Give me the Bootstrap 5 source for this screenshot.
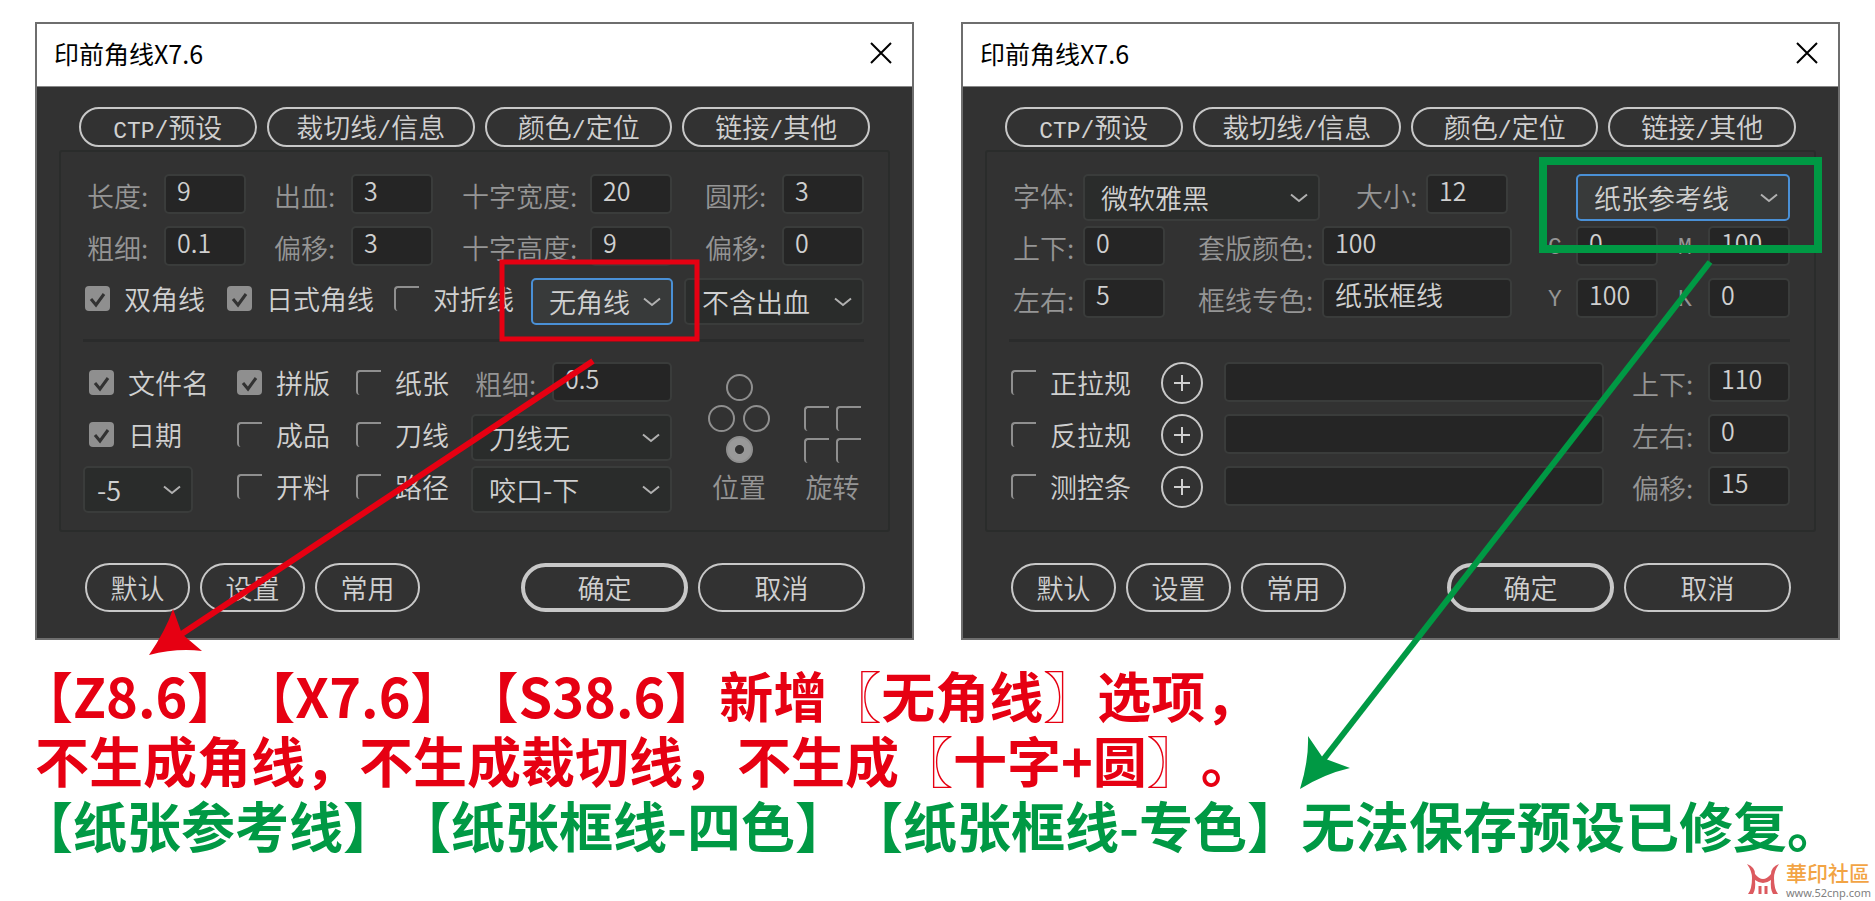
<!DOCTYPE html>
<html lang="zh-CN">
<head>
<meta charset="utf-8">
<meta name="viewport" content="width=device-width, initial-scale=1">
<title>印前角线X7.6</title>
<link href="https://cdn.jsdelivr.net/npm/bootstrap@5.3.0/dist/css/bootstrap.min.css" rel="stylesheet">
<style>
  body { background: #fff; font-family: "Noto Sans CJK SC", sans-serif; }
  .stage { padding: 22px 35px 0; }
  .dialogs { display: grid; grid-template-columns: 1fr 1fr; gap: 47px; }
  .dialogs > *, .tab-row > *, .line-row > *, .lower > * { min-width: 0; }

  .dialog { border: 2px solid #6e6e6e; background: #323232; color: #d0d0d0; font-size: 27px; line-height: 30px; font-weight: 350; }
  .title-bar { height: 63px; padding: 0 20px 4px 17px; background: #fff; color: #000; border-bottom: 1px solid #888; }
  .title-bar h1 { font-size: 25px; line-height: 30px; font-weight: 400; }
  .close-btn { border: 0; background: none; padding: 0; line-height: 0; }
  .dialog-content { padding: 20px 22px 26px; }

  .tab-row { display: grid; grid-template-columns: 178fr 209fr 188fr 188fr; gap: 10px; padding: 0 20px; margin-bottom: 3px; }
  .pill { border: 2px solid #c8c8c8; border-radius: 25px; background: transparent; color: #d0d0d0; padding: 0; font-weight: 350; white-space: nowrap; }
  .tab-row .pill { height: 40px; line-height: 36px; }
  .latin { font-family: "Liberation Mono", monospace; font-size: 23px; }

  .panel { border: 2px solid #2a2c2b; border-radius: 3px; padding: 22px 24px 17px 22px; }
  .rows { display: grid; gap: 5px; }
  .line-row { display: grid; align-items: start; min-height: 47px; }
  .left-a { grid-template-columns: 187fr 188fr 243fr 163fr; }
  .left-b { grid-template-columns: 142fr 167fr 139fr 153fr 180fr; }
  .right-a { grid-template-columns: 343fr 192fr 246fr; }
  .right-b { grid-template-columns: 185fr 350fr 130fr 116fr; }
  .right-c { grid-template-columns: 152fr 63fr 404fr 162fr; }
  .lower { display: grid; grid-template-columns: 152fr 119fr 117fr 235fr 158fr; grid-auto-rows: 47px; row-gap: 5px; align-items: start; }
  .dials { grid-column: 5; grid-row: 1 / 4; padding: 0 3px 13px 2px; height: 100%; }
  .dial { display: flex; flex-direction: column; align-items: center; gap: 10px; }

  .lbl { color: #959595; height: 44px; line-height: 44px; padding-left: 4px; flex: none; white-space: nowrap; }
  .lbl-2 { width: 74px; } .lbl-2w { width: 81px; } .lbl-4 { width: 128px; } .lbl-4w { width: 132px; } .lbl-1 { width: 32px; }
  .txt { height: 40px; border: 2px solid #3a3c3b; border-radius: 5px; background: #252525; color: #d0d0d0; font-size: 25px; font-weight: 350; padding: 0 0 8px 11px; min-width: 0; }
  .txt.cjk { font-size: 27px; }
  .short { width: 82px; flex: none; }
  .drop { height: 47px; border: 2px solid #3a3c3b; border-radius: 5px; background-color: #2a2c2b; color: #d0d0d0; font-size: 27px; font-weight: 350; line-height: 40px; padding: 1px 34px 0 16px;
    background-image: url("data:image/svg+xml,%3Csvg xmlns='http://www.w3.org/2000/svg' viewBox='0 0 18 10'%3E%3Cpath d='M1 1.5l8 6.5 8-6.5' fill='none' stroke='%23b0b0b0' stroke-width='2'/%3E%3C/svg%3E");
    background-size: 18px 10px; background-position: right 10px center; }
  .drop.active { border-color: #4a90d6; background-color: #383a3a; }
  .drop.tight { padding-left: 12px; width: 110px; }
  .drop-s { width: 142px; } .drop-m { width: 201px; }

  .tick { height: 41px; padding-left: 2px; gap: 14px; white-space: nowrap; }
  .tick.inset { padding-left: 6px; }
  .box { appearance: none; flex: none; width: 25px; height: 25px; margin: 0; border: 0 solid #8f8f8f; border-width: 2px 0 0 2px; border-radius: 4px 0 0 4px; }
  .box:checked { border: 0; border-radius: 4px; background: #8f8f8f url("data:image/svg+xml,%3Csvg xmlns='http://www.w3.org/2000/svg' viewBox='0 0 25 25'%3E%3Cpath d='M6 13l5 6L19 8' fill='none' stroke='%23323232' stroke-width='3'/%3E%3C/svg%3E"); }
  .dot { appearance: none; width: 27px; height: 27px; margin: 0; border: 2px solid #8f8f8f; border-radius: 50%; }
  .dot:checked { background: radial-gradient(circle, #323232 4px, #999 5px); }
  .tiles { display: grid; grid-template-columns: 25px 25px; gap: 7px; }
  .divider { height: 3px; margin: 14px 0 20px; background: #2a2b2b; }
  .plus { width: 42px; height: 42px; border-radius: 50%; line-height: 0; }

  .foot { padding: 0 25px 0 26px; margin-top: 31px; gap: 10px; }
  .foot .pill { height: 49px; line-height: 43px; width: 105px; }
  .foot .wide { width: 167px; }
  .foot .primary { border-width: 4px; line-height: 39px; }

  .notes { margin-top: 22px; font-size: 54px; line-height: 65px; font-weight: 700; text-spacing-trim: space-all; white-space: nowrap; }
  .notes p { margin: 0; }
  .hang { text-indent: -16px; }
  .tags { word-break: keep-all; }
  .red { color: #e60012; }
  .green { color: #009944; }

  .marks { position: absolute; left: 0; top: 0; width: 100%; pointer-events: none; }
  .site { position: absolute; right: 4px; bottom: 0; gap: 6px; }
  .site a { color: #808080; text-decoration: none; font: 11px/12px "Noto Sans", sans-serif; padding-bottom: 2px; }
  .site b { color: #f2a444; font-size: 21px; line-height: 30px; font-weight: 500; }
</style>
</head>
<body>
<main class="stage position-relative">
  <div class="dialogs">

    <section class="dialog">
      <header class="title-bar d-flex align-items-center justify-content-between">
        <h1 class="m-0">印前角线X7.6</h1>
        <button class="close-btn" type="button" aria-label="关闭"><svg width="22" height="22" viewBox="0 0 22 22"><path d="M1 1l20 20M21 1L1 21" stroke="#000" stroke-width="2"/></svg></button>
      </header>
      <div class="dialog-content">
        <nav class="tab-row">
          <button class="pill" type="button"><span class="latin">CTP/</span>预设</button>
          <button class="pill" type="button">裁切线<span class="latin">/</span>信息</button>
          <button class="pill" type="button">颜色<span class="latin">/</span>定位</button>
          <button class="pill" type="button">链接<span class="latin">/</span>其他</button>
        </nav>
        <div class="panel">
          <div class="rows">
            <div class="line-row left-a">
              <div class="d-flex"><label class="lbl lbl-2w" for="a1">长度:</label><input class="txt short" id="a1" value="9"></div>
              <div class="d-flex"><label class="lbl lbl-2w" for="a2">出血:</label><input class="txt short" id="a2" value="3"></div>
              <div class="d-flex"><label class="lbl lbl-4w" for="a3">十字宽度:</label><input class="txt short" id="a3" value="20"></div>
              <div class="d-flex"><label class="lbl lbl-2w" for="a4">圆形:</label><input class="txt short" id="a4" value="3"></div>
            </div>
            <div class="line-row left-a">
              <div class="d-flex"><label class="lbl lbl-2w" for="a5">粗细:</label><input class="txt short" id="a5" value="0.1"></div>
              <div class="d-flex"><label class="lbl lbl-2w" for="a6">偏移:</label><input class="txt short" id="a6" value="3"></div>
              <div class="d-flex"><label class="lbl lbl-4w" for="a7">十字高度:</label><input class="txt short" id="a7" value="9"></div>
              <div class="d-flex"><label class="lbl lbl-2w" for="a8">偏移:</label><input class="txt short" id="a8" value="0"></div>
            </div>
            <div class="line-row left-b">
              <label class="tick d-flex align-items-center"><input class="box" type="checkbox" checked>双角线</label>
              <label class="tick d-flex align-items-center"><input class="box" type="checkbox" checked>日式角线</label>
              <label class="tick d-flex align-items-center"><input class="box" type="checkbox">对折线</label>
              <select class="form-select drop active drop-s" aria-label="角线"><option>无角线</option></select>
              <select class="form-select drop" aria-label="出血"><option>不含出血</option></select>
            </div>
          </div>
          <div class="divider"></div>
          <div class="lower">
            <label class="tick inset d-flex align-items-center"><input class="box" type="checkbox" checked>文件名</label>
            <label class="tick d-flex align-items-center"><input class="box" type="checkbox" checked>拼版</label>
            <label class="tick d-flex align-items-center"><input class="box" type="checkbox">纸张</label>
            <div class="d-flex drop-m"><label class="lbl lbl-2w" for="b1">粗细:</label><input class="txt flex-grow-1" id="b1" value="0.5"></div>
            <label class="tick inset d-flex align-items-center"><input class="box" type="checkbox" checked>日期</label>
            <label class="tick d-flex align-items-center"><input class="box" type="checkbox">成品</label>
            <label class="tick d-flex align-items-center"><input class="box" type="checkbox">刀线</label>
            <select class="form-select drop drop-m" aria-label="刀线"><option>刀线无</option></select>
            <select class="form-select drop tight" aria-label="偏移值"><option>-5</option></select>
            <label class="tick d-flex align-items-center"><input class="box" type="checkbox">开料</label>
            <label class="tick d-flex align-items-center"><input class="box" type="checkbox">路径</label>
            <select class="form-select drop drop-m" aria-label="咬口"><option>咬口-下</option></select>
            <div class="dials d-flex justify-content-between align-items-end">
              <div class="dial">
                <div class="d-flex flex-column align-items-center gap-1">
                  <input class="dot" type="radio" name="pos" aria-label="上">
                  <div class="d-flex gap-2"><input class="dot" type="radio" name="pos" aria-label="左"><input class="dot" type="radio" name="pos" aria-label="右"></div>
                  <input class="dot" type="radio" name="pos" aria-label="下" checked>
                </div>
                <span class="lbl p-0 h-auto lh-1">位置</span>
              </div>
              <div class="dial">
                <div class="tiles">
                  <input class="box" type="checkbox" aria-label="左上"><input class="box" type="checkbox" aria-label="右上">
                  <input class="box" type="checkbox" aria-label="左下"><input class="box" type="checkbox" aria-label="右下">
                </div>
                <span class="lbl p-0 h-auto lh-1">旋转</span>
              </div>
            </div>
          </div>
        </div>
        <footer class="foot d-flex">
          <button class="pill" type="button">默认</button>
          <button class="pill" type="button">设置</button>
          <button class="pill" type="button">常用</button>
          <button class="pill wide primary ms-auto" type="button">确定</button>
          <button class="pill wide" type="button">取消</button>
        </footer>
      </div>
    </section>

    <section class="dialog">
      <header class="title-bar d-flex align-items-center justify-content-between">
        <h1 class="m-0">印前角线X7.6</h1>
        <button class="close-btn" type="button" aria-label="关闭"><svg width="22" height="22" viewBox="0 0 22 22"><path d="M1 1l20 20M21 1L1 21" stroke="#000" stroke-width="2"/></svg></button>
      </header>
      <div class="dialog-content">
        <nav class="tab-row">
          <button class="pill" type="button"><span class="latin">CTP/</span>预设</button>
          <button class="pill" type="button">裁切线<span class="latin">/</span>信息</button>
          <button class="pill" type="button">颜色<span class="latin">/</span>定位</button>
          <button class="pill" type="button">链接<span class="latin">/</span>其他</button>
        </nav>
        <div class="panel">
          <div class="rows">
            <div class="line-row right-a">
              <div class="d-flex pe-4"><label class="lbl lbl-2" for="c1">字体:</label><select class="form-select drop me-2" id="c1"><option>微软雅黑</option></select></div>
              <div class="d-flex"><label class="lbl lbl-2" for="c2">大小:</label><input class="txt short" id="c2" value="12"></div>
              <div class="d-flex"><div class="lbl-1 flex-shrink-0"></div><select class="form-select drop active" aria-label="参考线"><option>纸张参考线</option></select></div>
            </div>
            <div class="line-row right-b">
              <div class="d-flex"><label class="lbl lbl-2" for="c3">上下:</label><input class="txt short" id="c3" value="0"></div>
              <div class="d-flex pe-4"><label class="lbl lbl-4" for="c4">套版颜色:</label><input class="txt flex-grow-1 me-2" id="c4" value="100"></div>
              <div class="d-flex"><label class="lbl lbl-1 latin" for="c5">C</label><input class="txt short" id="c5" value="0"></div>
              <div class="d-flex justify-content-between"><label class="lbl latin" for="c6">M</label><input class="txt short" id="c6" value="100"></div>
            </div>
            <div class="line-row right-b">
              <div class="d-flex"><label class="lbl lbl-2" for="c7">左右:</label><input class="txt short" id="c7" value="5"></div>
              <div class="d-flex pe-4"><label class="lbl lbl-4" for="c8">框线专色:</label><input class="txt cjk flex-grow-1 me-2" id="c8" value="纸张框线"></div>
              <div class="d-flex"><label class="lbl lbl-1 latin" for="c9">Y</label><input class="txt short" id="c9" value="100"></div>
              <div class="d-flex justify-content-between"><label class="lbl latin" for="c10">K</label><input class="txt short" id="c10" value="0"></div>
            </div>
          </div>
          <div class="divider"></div>
          <div class="rows">
            <div class="line-row right-c">
              <label class="tick d-flex align-items-center"><input class="box" type="checkbox">正拉规</label>
              <button class="pill plus" type="button" aria-label="添加正拉规"><svg width="16" height="16" viewBox="0 0 16 16"><path d="M0 8h16M8 0v16" stroke="#d0d0d0" stroke-width="2"/></svg></button>
              <div class="d-flex"><input class="txt flex-grow-1 me-4" aria-label="正拉规文件"></div>
              <div class="d-flex justify-content-between"><label class="lbl" for="d1">上下:</label><input class="txt short" id="d1" value="110"></div>
            </div>
            <div class="line-row right-c">
              <label class="tick d-flex align-items-center"><input class="box" type="checkbox">反拉规</label>
              <button class="pill plus" type="button" aria-label="添加反拉规"><svg width="16" height="16" viewBox="0 0 16 16"><path d="M0 8h16M8 0v16" stroke="#d0d0d0" stroke-width="2"/></svg></button>
              <div class="d-flex"><input class="txt flex-grow-1 me-4" aria-label="反拉规文件"></div>
              <div class="d-flex justify-content-between"><label class="lbl" for="d2">左右:</label><input class="txt short" id="d2" value="0"></div>
            </div>
            <div class="line-row right-c">
              <label class="tick d-flex align-items-center"><input class="box" type="checkbox">测控条</label>
              <button class="pill plus" type="button" aria-label="添加测控条"><svg width="16" height="16" viewBox="0 0 16 16"><path d="M0 8h16M8 0v16" stroke="#d0d0d0" stroke-width="2"/></svg></button>
              <div class="d-flex"><input class="txt flex-grow-1 me-4" aria-label="测控条文件"></div>
              <div class="d-flex justify-content-between"><label class="lbl" for="d3">偏移:</label><input class="txt short" id="d3" value="15"></div>
            </div>
          </div>
        </div>
        <footer class="foot d-flex">
          <button class="pill" type="button">默认</button>
          <button class="pill" type="button">设置</button>
          <button class="pill" type="button">常用</button>
          <button class="pill wide primary ms-auto" type="button">确定</button>
          <button class="pill wide" type="button">取消</button>
        </footer>
      </div>
    </section>
  </div>

  <div class="notes">
    <p class="red hang">【Z8.6】【X7.6】【S38.6】新增〖无角线〗选项，</p>
    <p class="red">不生成角线，不生成裁切线，不生成〖十字+圆〗。</p>
    <p class="green hang">【纸张参考线】【纸张框线-四色】【纸张框线-专色】无法保存预设已修复。</p>
  </div>

  <svg class="marks" viewBox="0 0 1875 901" aria-hidden="true">
    <rect x="502" y="262" width="195" height="77" fill="none" stroke="#e60012" stroke-width="5"/>
    <path d="M593 361L180 635" stroke="#e60012" stroke-width="6"/>
    <path d="M149 655Q166 630 173 609L182 634L202 651Q176 648 149 655Z" fill="#e60012"/>
    <rect x="1543" y="161" width="275" height="88" fill="none" stroke="#009944" stroke-width="8"/>
    <path d="M1710 262L1323 760" stroke="#009944" stroke-width="6"/>
    <path d="M1300 789Q1309 760 1308 736L1323 758L1350 768Q1324 774 1300 789Z" fill="#009944"/>
  </svg>
</main>
<div class="site d-flex align-items-center">
  <svg width="34" height="32" viewBox="0 0 34 32" aria-hidden="true"><path d="M1 1Q9 4 9 11Q17 21 25 11Q25 4 33 1Q28 8 28 15Q28 26 32 31H27Q24 26 25 17Q17 23 9 17Q10 26 7 31H2Q6 26 6 15Q6 8 1 1Z" fill="#dc5a5f"/><path d="M14 31V23M20 31V23" stroke="#dc5a5f" stroke-width="3"/></svg>
  <div class="d-flex flex-column"><b>華印社區</b><a href="#">www.52cnp.com</a></div>
</div>
<script src="https://cdn.jsdelivr.net/npm/bootstrap@5.3.0/dist/js/bootstrap.bundle.min.js"></script>
</body>
</html>
